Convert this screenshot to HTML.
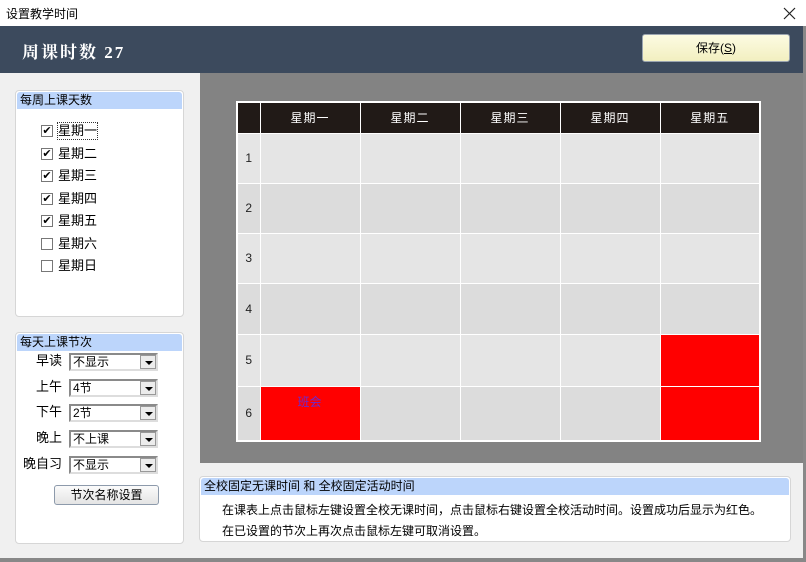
<!DOCTYPE html><html><head><meta charset="utf-8"><style>
*{box-sizing:border-box;margin:0;padding:0}
body{width:806px;height:562px;position:relative;background:#f0f0f0;font-family:"Liberation Sans","Noto Sans CJK SC",sans-serif;font-size:12px;color:#000;overflow:hidden}
.a{position:absolute}
.panel{position:absolute;background:#fff;border:1px solid #d6d6d6;border-radius:4px}
.ph{position:absolute;left:1px;right:1px;top:1px;height:17px;background:#bcd5fb;font-size:12px;line-height:17px;padding-left:3px;border-radius:3px 3px 0 0}
.cb{position:absolute;left:41px;width:12px;height:12px;border:1px solid #777;background:#fff;font-size:11px;line-height:10px;text-align:center}
.cl{position:absolute;left:58px;font-size:13px;line-height:16px}
.lb{position:absolute;left:2px;width:60px;text-align:right;font-size:13px;line-height:18px}
.sel{position:absolute;left:69px;width:89px;height:18px;border:2px solid #8a8a8a;border-right-color:#ddd;border-bottom-color:#ddd;background:#fff;font-size:12px;line-height:14px;padding-left:2px}
.sel i{position:absolute;right:0;top:0;width:16px;height:14px;background:#ececec;border:1px solid #999}
.sel i:after{content:"";position:absolute;left:4px;top:5px;border:4px solid transparent;border-top:4px solid #000;border-bottom:0}
table{border-collapse:collapse;position:absolute;left:236px;top:101px;border:2px solid #fff}
td,th{border:1px solid #fff;padding:0}
th{background:#211a17;color:#fff;font-weight:normal;font-size:12px;height:31px;letter-spacing:1px}
td{background:#e5e5e5;width:100px;vertical-align:middle}
tr.e td{background:#dcdcdc}
td.n{width:23px;text-align:center;font-size:12px;color:#222}
td.r{background:#ff0000!important;vertical-align:top;text-align:center;color:#6a2ad0;padding-top:6px}
</style></head><body>
<div class="a" style="left:0;top:0;width:806px;height:26px;background:#fff"></div>
<div class="a" style="left:6px;top:5px;font-size:12px">设置教学时间</div>
<svg class="a" style="left:783px;top:7px" width="13" height="13"><path d="M1 1L12 12M12 1L1 12" stroke="#222" stroke-width="1.2"/></svg>
<div class="a" style="left:0;top:26px;width:803px;height:47px;background:#3c4a5d"></div>
<div class="a" style="left:22px;top:38px;color:#fff;font-size:17px;font-weight:bold;font-family:'Liberation Serif','Noto Serif CJK SC',serif;letter-spacing:2px">周课时数 27</div>
<div class="a" style="left:642px;top:34px;width:148px;height:28px;border:1px solid #9aa4b0;border-radius:3px;background:linear-gradient(#fcfbe2,#f2efc0);text-align:center;line-height:26px;font-size:12px">保存(<u>S</u>)</div>
<div class="a" style="left:803px;top:26px;width:3px;height:536px;background:#888"></div>
<div class="a" style="left:0;top:558px;width:806px;height:4px;background:#888"></div>

<div class="panel" style="left:15px;top:90px;width:169px;height:227px"><div class="ph">每周上课天数</div></div>
<div class="cb" style="top:125px">✔</div><div class="cl" style="top:123px;outline:1px dotted #333">星期一</div>
<div class="cb" style="top:148px">✔</div><div class="cl" style="top:146px">星期二</div>
<div class="cb" style="top:170px">✔</div><div class="cl" style="top:168px">星期三</div>
<div class="cb" style="top:193px">✔</div><div class="cl" style="top:191px">星期四</div>
<div class="cb" style="top:215px">✔</div><div class="cl" style="top:213px">星期五</div>
<div class="cb" style="top:238px"></div><div class="cl" style="top:236px">星期六</div>
<div class="cb" style="top:260px"></div><div class="cl" style="top:258px">星期日</div>

<div class="panel" style="left:15px;top:332px;width:169px;height:212px"><div class="ph">每天上课节次</div></div>
<div class="lb" style="top:352px">早读</div><div class="sel" style="top:353px">不显示<i></i></div>
<div class="lb" style="top:378px">上午</div><div class="sel" style="top:379px">4节<i></i></div>
<div class="lb" style="top:403px">下午</div><div class="sel" style="top:404px">2节<i></i></div>
<div class="lb" style="top:429px">晚上</div><div class="sel" style="top:430px">不上课<i></i></div>
<div class="lb" style="top:455px">晚自习</div><div class="sel" style="top:456px">不显示<i></i></div>
<div class="a" style="left:54px;top:485px;width:105px;height:20px;border:1px solid #8d9aab;border-radius:3px;background:linear-gradient(#fbfbfb,#e4e4e4);text-align:center;line-height:18px;font-size:12px">节次名称设置</div>

<div class="a" style="left:200px;top:73px;width:603px;height:390px;background:#838383"></div>
<table>
<tr><th style="width:23px"></th><th>星期一</th><th>星期二</th><th>星期三</th><th>星期四</th><th>星期五</th></tr>
<tr style="height:50px"><td class="n">1</td><td></td><td></td><td></td><td></td><td></td></tr>
<tr class="e" style="height:50px"><td class="n">2</td><td></td><td></td><td></td><td></td><td></td></tr>
<tr style="height:50px"><td class="n">3</td><td></td><td></td><td></td><td></td><td></td></tr>
<tr class="e" style="height:51px"><td class="n">4</td><td></td><td></td><td></td><td></td><td></td></tr>
<tr style="height:52px"><td class="n">5</td><td></td><td></td><td></td><td></td><td class="r"></td></tr>
<tr class="e" style="height:55px"><td class="n">6</td><td class="r" style="text-align:left;padding-left:37px">班会</td><td></td><td></td><td></td><td class="r"></td></tr>
</table>

<div class="panel" style="left:199px;top:476px;width:592px;height:66px"><div class="ph" style="font-size:12px">全校固定无课时间 和 全校固定活动时间</div></div>
<div class="a" style="left:222px;top:501px;font-size:12px">在课表上点击鼠标左键设置全校无课时间，点击鼠标右键设置全校活动时间。设置成功后显示为红色。</div>
<div class="a" style="left:222px;top:522px;font-size:12px">在已设置的节次上再次点击鼠标左键可取消设置。</div>
</body></html>
